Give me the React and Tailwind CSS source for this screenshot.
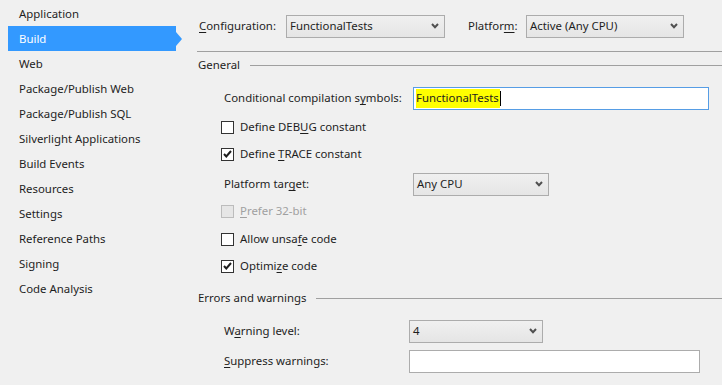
import React from 'react';

const font = { fontFamily: '"Noto Sans", "Open Sans", sans-serif' };

const pages = [
  'Application', 'Build', 'Web', 'Package/Publish Web', 'Package/Publish SQL',
  'Silverlight Applications', 'Build Events', 'Resources', 'Settings',
  'Reference Paths', 'Signing', 'Code Analysis',
];

const Chevron = () => (
  <svg width="8" height="6" viewBox="0 0 8 6" className="shrink-0">
    <path d="M1 1 L4 4.2 L7 1" fill="none" stroke="#505050" strokeWidth="2" />
  </svg>
);

const Select = ({ value, className }) => (
  <div className={`flex items-center justify-between h-[23px] border border-[#acacac] bg-gradient-to-b from-[#f0f0f0] to-[#e5e5e5] pl-[3px] pr-[5px] ${className}`}>
    <span>{value}</span>
    <Chevron />
  </div>
);

const Check = ({ checked, disabled }) => (
  <div className={`w-[13px] h-[13px] border flex items-center justify-center shrink-0 ${disabled ? 'border-[#bcbcbc] bg-[#e6e6e6]' : 'border-[#333333] bg-white'}`}>
    {checked && (
      <svg width="9" height="8" viewBox="0 0 9 8">
        <path d="M1 4 L3.3 6.5 L8 1" fill="none" stroke="#1e1e1e" strokeWidth="2" />
      </svg>
    )}
  </div>
);

const CheckRow = ({ children, checked, disabled, className }) => (
  <div className={`flex items-center h-[24px] pl-[24px] gap-[6px] ${disabled ? 'text-[#a0a0a0]' : ''} ${className}`}>
    <Check checked={checked} disabled={disabled} />
    <span>{children}</span>
  </div>
);

const Header = ({ title, className }) => (
  <div className={`flex items-center h-[26px] pl-[1px] ${className}`}>
    <span className="mr-[10px]">{title}</span>
    <div className="flex-1 border-t border-[#a0a0a0]" />
  </div>
);

export default function App() {
  return (
    <div className="w-[722px] h-[385px] bg-[#f0f0f0] text-[#1e1e1e] text-[11.4px] flex overflow-hidden" style={font}>
      <div className="w-[197px] pt-[1px] shrink-0">
        {pages.map((p) =>
          p === 'Build' ? (
            <div key={p} className="flex items-center h-[25px] ml-[8px]">
              <div className="w-[168px] h-full bg-[#3399ff] text-white flex items-center pl-[11px]">{p}</div>
              <svg width="7" height="14" viewBox="0 0 7 14">
                <path d="M0 0 L6 7 L0 14 Z" fill="#3399ff" />
              </svg>
            </div>
          ) : (
            <div key={p} className="flex items-center h-[25px] pl-[19px]">{p}</div>
          )
        )}
      </div>

      <div className="flex-1 flex flex-col">
        <div className="flex items-center h-[51px] pl-[2px] pt-[1px]">
          <span className="w-[87px]"><u className="underline-offset-2">C</u>onfiguration:</span>
          <Select value="FunctionalTests" className="w-[159px]" />
          <span className="w-[58px] ml-[23px]">Platfor<u className="underline-offset-2">m</u>:</span>
          <Select value="Active (Any CPU)" className="w-[158px]" />
        </div>
        <div className="border-t border-[#a0a0a0]" />

        <Header title="General" />

        <div className="flex items-center h-[24px] pl-[27px] mt-[8px]">
          <span className="w-[189px]">Conditional compilation s<u className="underline-offset-2">y</u>mbols:</span>
          <div className="flex items-center w-[296px] h-[23px] border border-[#569de5] bg-white pl-[2px]">
            <span className="bg-[#ffff00] h-[19px] flex items-center pr-[1px]">FunctionalTests</span>
            <div className="w-[1px] h-[15px] bg-black" />
          </div>
        </div>

        <CheckRow className="mt-[5px]">Define DEB<u className="underline-offset-2">U</u>G constant</CheckRow>
        <CheckRow checked className="mt-[3px]">Define <u className="underline-offset-2">T</u>RACE constant</CheckRow>

        <div className="flex items-center h-[24px] pl-[27px] mt-[6px]">
          <span className="w-[189px]">Platform tar<u className="underline-offset-2">g</u>et:</span>
          <Select value="Any CPU" className="w-[136px]" />
        </div>

        <CheckRow disabled className="mt-[3px]"><u className="underline-offset-2">P</u>refer 32-bit</CheckRow>
        <CheckRow className="mt-[4px]">Allow unsa<u className="underline-offset-2">f</u>e code</CheckRow>
        <CheckRow checked className="mt-[3px]">Optimi<u className="underline-offset-2">z</u>e code</CheckRow>

        <Header title="Errors and warnings" className="mt-[7px]" />

        <div className="flex items-center h-[24px] pl-[27px] mt-[8px]">
          <span className="w-[185px]">W<u className="underline-offset-2">a</u>rning level:</span>
          <Select value="4" className="w-[134px]" />
        </div>
        <div className="flex items-center h-[24px] pl-[27px] mt-[6px]">
          <span className="w-[185px]"><u className="underline-offset-2">S</u>uppress warnings:</span>
          <div className="w-[291px] h-[23px] border border-[#acacac] bg-white" />
        </div>
      </div>
    </div>
  );
}
